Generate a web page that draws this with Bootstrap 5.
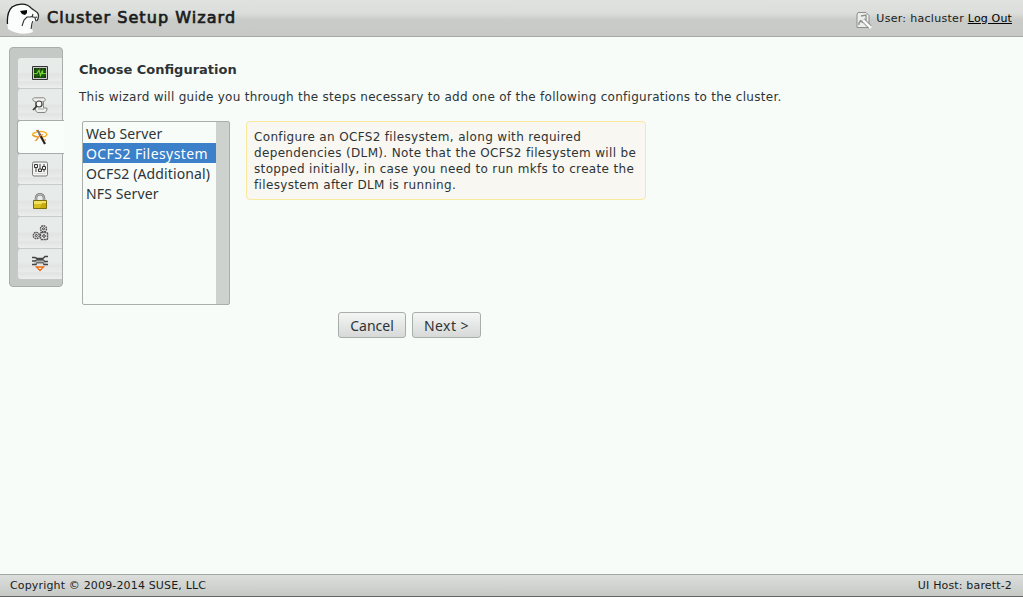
<!DOCTYPE html>
<html lang="en">
<head>
<meta charset="utf-8">
<title>Cluster Setup Wizard</title>
<meta name="viewport" content="width=device-width, initial-scale=1">
<link rel="stylesheet" href="https://cdn.jsdelivr.net/npm/bootstrap@5.3.0/dist/css/bootstrap.min.css">
<style>
body{background:#f7fcf9;color:#2e3436;font:12px/16px "DejaVu Sans",sans-serif;overflow:hidden}
.topbar{height:37px;padding:0 11px 0 6px;border-bottom:1px solid #a7aaa7;background:linear-gradient(#e0e2e0 0,#dcdedc 35%,#c9ccc9 55%,#c6c9c6 100%);color:#1a1c1c}
.topbar h1{font-size:16px;line-height:20px;font-weight:400;margin:0 0 0 7px;letter-spacing:1.05px;-webkit-text-stroke:.7px #1a1c1c}
.user{font-size:11px;letter-spacing:.3px;padding-top:1px}
.user a{color:#000;letter-spacing:.16px}
.side{width:54px;height:240px;margin:10px 0 0 9px;padding:10px 0 0 8px;background:#c5c9c6;border:1px solid #aaadaa;border-radius:4px}
.tab{height:32px;flex:none;background:linear-gradient(#e7ebe9 0,#e7ebe9 45%,#e2e4e3 55%,#e9ebea 75%,#e0e3e1 80%,#ebeeec 100%);border-bottom:1px solid #c9cbca;border-radius:3px 0 0 3px}
.tab:first-child{height:31px}
.tab:last-child{height:30px;border:0;padding-bottom:1px}
.tab.active{background:#f9fefb;border:1px solid #a9acaa;border-right:0;height:34px;margin:-1px -2px 0 -1px;padding:0 2px 0 0;z-index:1}
.tab.active + .tab{height:31px}
main{padding:25px 0 0 16px}
main h2{font-size:13px;line-height:16px;font-weight:700;margin:0 0 11px}
.intro{margin:0 0 16px;letter-spacing:.28px}
.choices{width:148px;height:184px;margin-left:3px;border:1px solid #a8afaa;border-radius:2px;padding-top:1px;font:14px/20px "Noto Sans",sans-serif;letter-spacing:.13px;background:linear-gradient(#ced2cf,#ced2cf) right/13px 100% no-repeat}
.choices div{width:133px;height:20px;padding:1px 0 0 3px;white-space:nowrap}
.choices .sel{background:#3b80c9;color:#fff;letter-spacing:.42px}
.tip{width:400px;height:79px;margin-left:16px;padding:7px;border:1px solid #fae99c;border-radius:4px;background:#f9f7f1;white-space:nowrap;letter-spacing:.34px}
.actions{padding:7px 0 0 259px;gap:6px}
.actions .btn{height:26px;padding:1px 0 0;border:1px solid #a8afaa;border-radius:3px;background:linear-gradient(#f3f6f4,#d6d9d7);color:#2e3436;font:14px/22px "Noto Sans",sans-serif}
.actions .next{letter-spacing:.45px}
.foot{height:23px;padding:0 11px 0 10px;border-top:1px solid #a3a7a4;border-bottom:1px solid #626563;background:linear-gradient(#dcdedc,#c5c9c6);font-size:11px;letter-spacing:.16px;color:#1a1c1c}
</style>
<script src="https://cdn.jsdelivr.net/npm/bootstrap@5.3.0/dist/js/bootstrap.bundle.min.js"></script>
</head>
<body class="d-flex flex-column vh-100">
<header class="topbar d-flex align-items-center flex-shrink-0">
  <svg width="34" height="32" viewBox="0 0 34 32">
    <path d="M2 27C1 20 1 12 4 8 9 2 20 1 25 6c3 2 7 3 8 7-1 3-2 6-4 6-3 2-4 6-2 11-7 3-18 2-25-3Z" fill="#fafdfb"/>
    <path d="M1.500 22C1 15 2 9 6 5 12 1 21 1 25 6" fill="none" stroke="#151515" stroke-width="1.300"/>
    <path d="M25 6c3 3 7 3 7.500 7 0 3-.5 5-2 6" fill="none" stroke="#333" stroke-width="1.300"/>
    <path d="M31 15c-3 1-5-1-7 0h-3l-3 3-2 6M27 12l-1 3M29 16l1 3M27 19c-2 3-1 5-2 8" fill="none" stroke="#333" stroke-width="1.100"/>
    <path d="M14 9l7-1v3l-2 2-3-1Z" fill="#080808"/>
  </svg>
  <h1>Cluster Setup Wizard</h1>
  <div class="user ms-auto d-flex align-items-center">
    <svg width="16" height="17" viewBox="0 0 16 17" class="me-1 mt-1"><path d="M2 .5h8l3 3v12H1V2Z" fill="#eceeec" stroke="#8b8e8c"/><path d="M5 4l5-1v5c-1 3-5 3-6 0M3 13c-1-4 4-5 6-2" fill="none" stroke="#8d918e" stroke-width="1.300"/><path d="M7 8l7 7" stroke="#777" stroke-width="4"/><path d="M7 8l8 8" stroke="#f7f8f7" stroke-width="2.600"/></svg>
    <span>User: hacluster <a href="#">Log Out</a></span>
  </div>
</header>
<div class="d-flex flex-grow-1 align-items-start">
  <nav class="side d-flex flex-column flex-shrink-0">
    <div class="tab d-flex align-items-center justify-content-center"><svg width="16" height="16" viewBox="0 0 16 16"><path d="M.5 1.500h15v13H.5z" fill="#ccc" stroke="#333"/><path d="M2 3h12v10H2z" fill="#153f08"/><path d="M5 3v10M8 3v10M11 3v10M2 6h12M2 10h12" stroke="#2b6815"/><path d="M2 8.500h3l2-3 1.500 5 2-5v3H14" fill="none" stroke="#70d832" stroke-width="1.200"/></svg></div>
    <div class="tab d-flex align-items-center justify-content-center"><svg width="16" height="16" viewBox="0 0 16 16"><path d="M3.500 4.500C0 4.500 0 .8 2.500.8h9c2 0 2.500 3.500 0 3.500V11h3.500c0 3-1 4.500-3 4.500H6c-2 0-2.500-2-2.500-4Z" fill="#f0f0ee" stroke="#858683"/><path d="M6 12h6M9 4.500h2M10 8h1.500" stroke="#aaa"/><circle cx="7" cy="7" r="3" fill="#f8f8f8" stroke="#444" stroke-width="1.200"/><path d="M5 9l-4 4" stroke="#333" stroke-width="1.700"/></svg></div>
    <div class="tab active d-flex align-items-center justify-content-center"><svg width="16" height="18" viewBox="0 0 16 18"><path d="M6 9C1 9-1 6.500 2 5c4-2 10-2 12 0 2 2 0 4-4 4" fill="none" stroke="#f5b02a" stroke-width="1.400"/><path d="M1 7.500l4 1M4 2l3 3" stroke="#ed8a20"/><path d="M7.500 6l5.500 10" stroke="#222" stroke-width="2.200"/><path d="M5.500 2l2.500 5" stroke="#777" stroke-width="2"/><path d="M11 6.500l-4 2-3 4" fill="none" stroke="#f08a30" stroke-width="1.300"/><path d="M13 11v2M3.500 12v1" stroke="#f3a060" stroke-width="1.500"/></svg></div>
    <div class="tab d-flex align-items-center justify-content-center"><svg width="16" height="16" viewBox="0 0 16 16"><rect x=".5" y="1" width="15" height="14" rx="1.500" fill="#f3f3f2" stroke="#777"/><path d="M4 3v8M8 3v8M12 3v8" stroke="#444"/><path d="M2.500 3.500h3v3h-3zM6.500 8h3v2.500h-3zM10.500 5.500h3v3h-3z" fill="#eee" stroke="#333"/><path d="M2 12.500h12" stroke="#ddd"/></svg></div>
    <div class="tab d-flex align-items-center justify-content-center"><svg width="16" height="16" viewBox="0 0 16 16"><path d="M4 8V5c0-5 8-5 8 0v3" fill="none" stroke="#777" stroke-width="2.600"/><path d="M4 8V5c0-5 8-5 8 0v3" fill="none" stroke="#ccc"/><path d="M1.500 7.500h13v8h-13z" fill="#d7be21" stroke="#7d6c0c"/><path d="M2 8h12v3H2z" fill="#f0e260"/><path d="M10 10h4v5H8z" fill="#c8ab12"/></svg></div>
    <div class="tab d-flex align-items-center justify-content-center"><svg width="17" height="16" viewBox="0 0 17 16"><g fill="#eee" stroke="#555" stroke-width="1.500"><circle cx="11.500" cy="3.800" r="3" stroke-dasharray="1.700 .6"/><circle cx="4.300" cy="10.500" r="3" stroke-dasharray="1.700 .6"/><rect x="8.500" y="7.500" width="7" height="7" rx="1" stroke-dasharray="2.200 .5"/></g><g fill="#f8f8f8" stroke="#333"><circle cx="11.500" cy="3.800" r="1"/><circle cx="4.300" cy="10.500" r="1"/><circle cx="12" cy="11" r="1.300"/></g></svg></div>
    <div class="tab d-flex align-items-center justify-content-center"><svg width="16" height="17" viewBox="0 0 16 17"><path d="M0 2.500h3l2 1h6l2-2h3M0 6h3l2-1h6l2 1.500h3M0 9.500h4l1-2h6l1 2h4" fill="none" stroke="#444" stroke-width="1.400"/><path d="M4 6h8M2 8h12" stroke="#999"/><path d="M4.500 12h7L8 15.500Z" fill="#fff" stroke="#ee6b10" stroke-width="1.300"/></svg></div>
  </nav>
  <main class="flex-grow-1">
    <h2>Choose Configuration</h2>
    <p class="intro">This wizard will guide you through the steps necessary to add one of the following configurations to the cluster.</p>
    <div class="d-flex align-items-start">
      <div class="choices flex-shrink-0"><div>Web Server</div><div class="sel">OCFS2 Filesystem</div><div>OCFS2 (Additional)</div><div>NFS Server</div></div>
      <div class="tip">Configure an OCFS2 filesystem, along with required<br>dependencies (DLM). Note that the OCFS2 filesystem will be<br>stopped initially, in case you need to run mkfs to create the<br>filesystem after DLM is running.</div>
    </div>
    <div class="actions d-flex"><button class="btn" style="width:68px">Cancel</button><button class="btn next" style="width:69px">Next &gt;</button></div>
  </main>
</div>
<footer class="foot d-flex align-items-center justify-content-between flex-shrink-0"><span>Copyright © 2009-2014 SUSE, LLC</span><span>UI Host: barett-2</span></footer>
</body>
</html>
